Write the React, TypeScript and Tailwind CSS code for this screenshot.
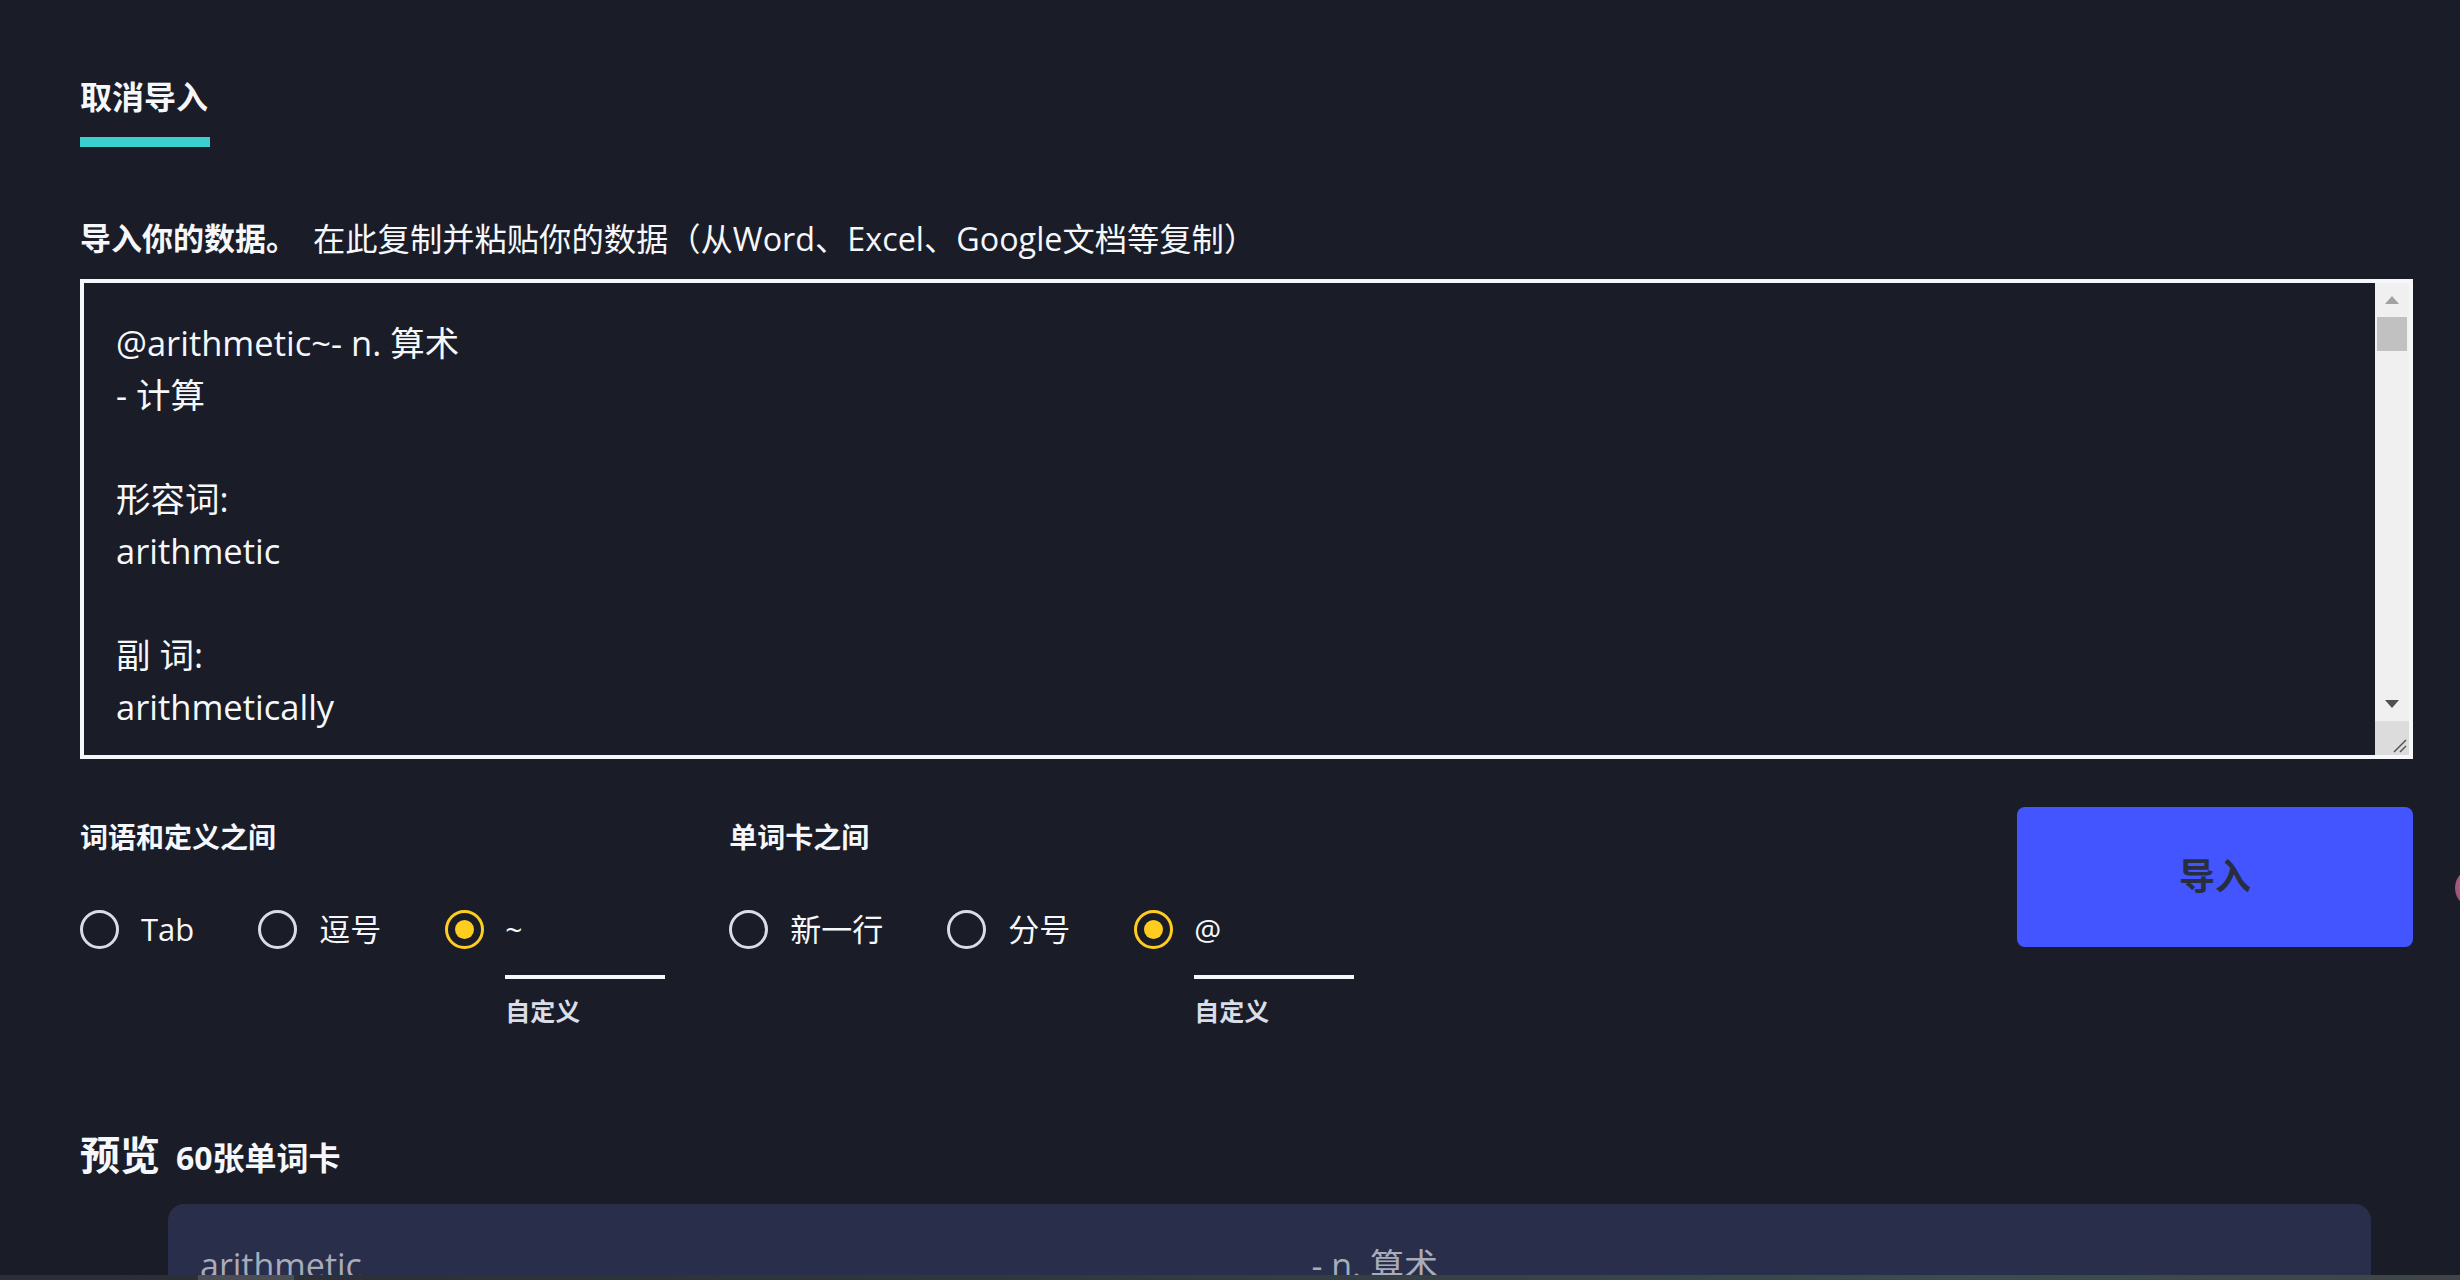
import React from 'react'

const pasted = [
  '@arithmetic~- n. 算术',
  '- 计算',
  '',
  '形容词:',
  'arithmetic',
  '',
  '副 词:',
  'arithmetically',
  '',
  '派生词:',
]

const Radio = ({ checked, label }: { checked?: boolean; label?: string }) => (
  <div className="flex items-center h-[42px]">
    <span
      className={
        checked
          ? 'w-[39px] h-[39px] rounded-full border-[3px] border-[#ffcd1f] flex items-center justify-center shrink-0'
          : 'w-[39px] h-[39px] rounded-full border-[3px] border-[#d9dbe9] shrink-0'
      }
    >
      {checked && <span className="w-[19px] h-[19px] rounded-full bg-[#ffcd1f]" />}
    </span>
    {label && <span className="ml-[22px] text-[31px] leading-[42px] text-[#f6f7fb]">{label}</span>}
  </div>
)

const CustomField = ({ value }: { value: string }) => (
  <div className="flex items-start">
    <Radio checked />
    <div className="ml-[21px] flex flex-col">
      <div className="w-[160px] h-[71px] border-b-4 border-[#f6f7fb]">
        <div className="h-[42px] flex items-center text-[30px] text-[#f6f7fb]">{value}</div>
      </div>
      <span className="mt-[16px] text-[25px] leading-[32px] font-bold text-[#d9dde8]">自定义</span>
    </div>
  </div>
)

const Group = ({ title, children }: { title: string; children: React.ReactNode }) => (
  <div className="flex flex-col">
    <h3 className="text-[28px] leading-[36px] font-bold text-[#f6f7fb]">{title}</h3>
    <div className="mt-[53px] flex items-start gap-[64px]">{children}</div>
  </div>
)

export default function App() {
  return (
    <div className="relative w-full h-[1280px] overflow-hidden bg-[#1a1d28] text-[#f6f7fb] [font-family:'Open_Sans','Noto_Sans_CJK_SC',sans-serif]">
      <div className="pl-[80px] pr-[47px]">
        {/* tab */}
        <div className="pt-[77px]">
          <div className="text-[32px] leading-[40px] font-bold">取消导入</div>
          <div className="mt-[20px] w-[130px] h-[10px] bg-[#3ccfcf]" />
        </div>

        <p className="mt-[71px] text-[32.3px] leading-[40px] flex items-center whitespace-nowrap">
          <b className="text-[31px] font-bold">导入你的数据。</b>
          <span className="ml-[16px]">在此复制并粘贴你的数据（从Word、Excel、Google文档等复制）</span>
        </p>

        {/* textarea */}
        <div className="mt-[21px] h-[480px] border-4 border-[#f6f7fb] flex">
          <div className="flex-1 overflow-hidden pt-[34px] pl-[32px] text-[34.5px] leading-[52px] whitespace-pre">
            {pasted.map((line, i) => (
              <div key={i}>{line || '\u00a0'}</div>
            ))}
          </div>
          <div className="w-[34px] flex flex-col bg-[#f0f0f0]">
            <div className="h-[34px] flex items-center justify-center">
              <svg width="14" height="8" viewBox="0 0 14 8">
                <path d="M0 8 L7 0 L14 8 Z" fill="#a3a3a3" />
              </svg>
            </div>
            <div className="mx-[2px] h-[34px] bg-[#c1c1c1]" />
            <div className="flex-1" />
            <div className="h-[34px] flex items-center justify-center">
              <svg width="14" height="8" viewBox="0 0 14 8">
                <path d="M0 0 L7 8 L14 0 Z" fill="#505050" />
              </svg>
            </div>
            <div className="h-[34px] bg-[#dcdcdc] flex items-end justify-end p-[2px]">
              <svg width="16" height="16" viewBox="0 0 16 16">
                <path d="M15 3 L3 15 M15 9 L9 15" stroke="#555" strokeWidth="1.5" />
              </svg>
            </div>
          </div>
        </div>

        {/* options */}
        <div className="mt-[48px] flex items-start justify-between">
          <div className="pt-[12px] flex items-start gap-[64px]">
            <Group title="词语和定义之间">
              <Radio label="Tab" />
              <Radio label="逗号" />
              <CustomField value="~" />
            </Group>
            <Group title="单词卡之间">
              <Radio label="新一行" />
              <Radio label="分号" />
              <CustomField value="@" />
            </Group>
          </div>
          <button className="w-[396px] h-[140px] rounded-[8px] bg-[#4255ff] text-[36px] font-bold text-[#282e3e]">
            导入
          </button>
        </div>

        {/* preview */}
        <div className="mt-[104px] flex items-baseline">
          <h2 className="text-[40px] leading-[48px] font-bold">预览</h2>
          <span className="ml-[16px] text-[32px] font-bold">60张单词卡</span>
        </div>

        <div className="mt-[22px] ml-[88px] mr-[42px] rounded-[16px] bg-[#292e4b] pt-[36px] px-[32px] pb-[40px]">
          <div className="grid grid-cols-2 gap-x-[84px] text-[34px] leading-[51px] text-[#a8abb8]">
            <span>arithmetic</span>
            <span>- n. 算术</span>
          </div>
        </div>
      </div>

      {/* floating widget peeking from the right edge */}
      <div className="absolute left-[2455px] top-[868px] w-[40px] h-[40px] rounded-full bg-[radial-gradient(circle_at_40%_40%,#c06a90,#7c3f5e)]" />

      {/* bottom strip */}
      <div className="absolute left-0 right-0 bottom-0 h-[5px] bg-[linear-gradient(90deg,#2a2e36,#30363e_40%,#3c4c50_80%,#3e4448)]">
        <div className="ml-[198px] w-[96px] h-full bg-[#4b4e55]" />
      </div>
    </div>
  )
}
